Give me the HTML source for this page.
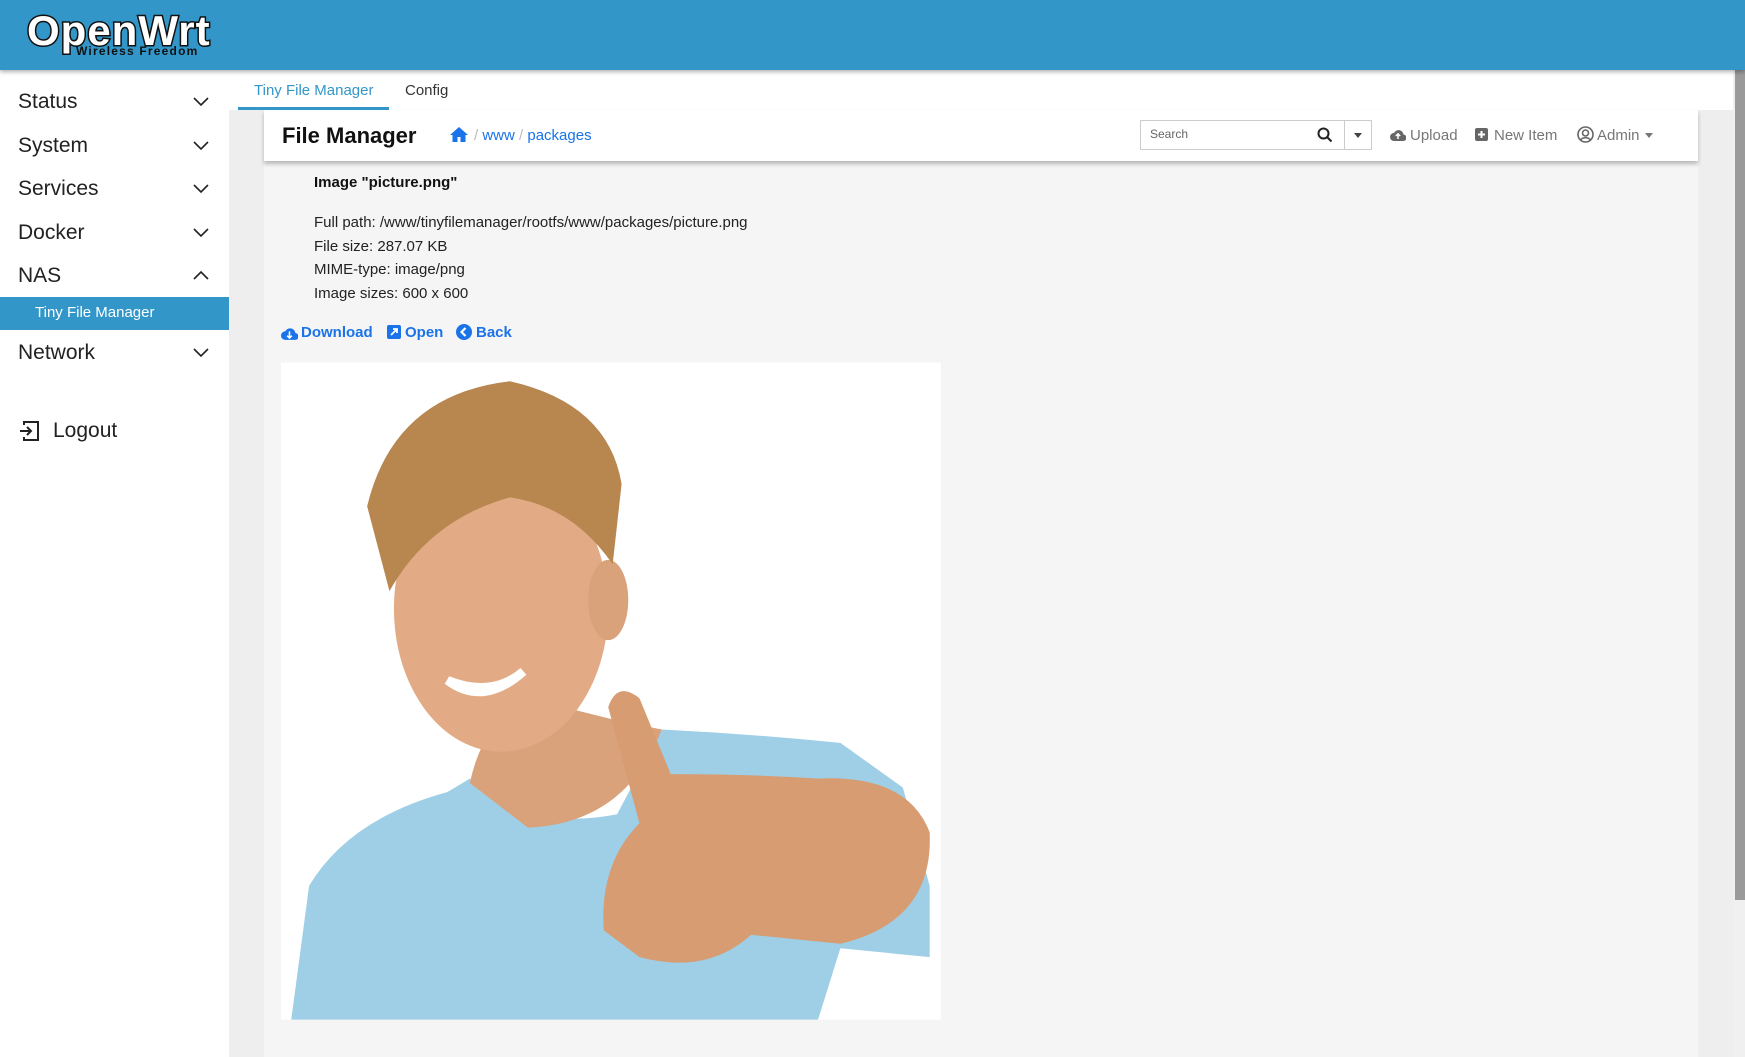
<!DOCTYPE html>
<html><head><meta charset="utf-8"><style>
*{margin:0;padding:0;box-sizing:border-box}
body{width:1745px;height:1057px;overflow:hidden;background:#eee;font-family:"Liberation Sans",sans-serif;position:relative;color:#222}
.hdr{position:absolute;left:0;top:0;width:1745px;height:70px;background:#3396c9;box-shadow:0 2px 4px rgba(0,0,0,.3);z-index:3}
.logo{position:absolute;left:27px;top:10px;font:bold 42px "Liberation Sans",sans-serif;color:#fff;letter-spacing:1px;-webkit-text-stroke:3px #111;paint-order:stroke fill;line-height:42px}
.logo small{position:absolute;left:49px;top:34px;font:bold 12px "Liberation Sans",sans-serif;color:#111;-webkit-text-stroke:0;letter-spacing:1.2px;white-space:nowrap}
.side{position:absolute;left:0;top:70px;width:229px;height:987px;background:#fff}
.it{position:absolute;left:18px;font-size:21px;color:#222}
.chev{position:absolute;left:193px;width:16px;height:16px}
.sel{position:absolute;left:0;top:227px;width:229px;height:33px;background:#3396c9;color:#fff;font-size:15px;padding:7px 0 0 35px}
.main{position:absolute;left:229px;top:70px;width:1504px;height:987px;background:#eee}
.tabs{position:absolute;left:0;top:0;width:1504px;height:40px;background:#fff}
.tab{position:absolute;top:12px;font-size:15px}
.card{position:absolute;left:35px;top:40px;width:1434px;height:947px;background:#f5f5f5}
.bar{position:absolute;left:0;top:0;width:1434px;height:51px;background:#fff;box-shadow:0 3px 4px rgba(0,0,0,.25)}
.t{position:absolute;font-size:15px;color:#222;white-space:nowrap}
.lnk{color:#1a73e8;font-weight:bold}
.scroll{position:absolute;left:1733px;top:70px;width:12px;height:987px;background:#f0f0f0}
.thumb{position:absolute;left:1735px;top:70px;width:10px;height:830px;background:#9a9a9a}
</style></head><body>
<div class="hdr"><div class="logo">OpenWrt<small>Wireless Freedom</small></div></div>
<div class="side">
<div class="it" style="top:20px">Status</div>
<div class="it" style="top:64px">System</div>
<div class="it" style="top:107px">Services</div>
<div class="it" style="top:151px">Docker</div>
<div class="it" style="top:194px">NAS</div>
<div class="sel">Tiny File Manager</div>
<div class="it" style="top:271px">Network</div>
<svg style="position:absolute;left:18px;top:350px" width="22" height="22" viewBox="0 0 22 22" fill="none" stroke="#222" stroke-width="2"><path d="M6 5V2h14v18H6v-3"/><path d="M2 11h11M9 7l4 4-4 4"/></svg>
<div class="it" style="top:349px;left:53px">Logout</div>
<svg class="chev" style="top:23px" viewBox="0 0 16 16" fill="none" stroke="#222" stroke-width="1.6"><path d="M1 5l7 7 7-7"/></svg>
<svg class="chev" style="top:67px" viewBox="0 0 16 16" fill="none" stroke="#222" stroke-width="1.6"><path d="M1 5l7 7 7-7"/></svg>
<svg class="chev" style="top:110px" viewBox="0 0 16 16" fill="none" stroke="#222" stroke-width="1.6"><path d="M1 5l7 7 7-7"/></svg>
<svg class="chev" style="top:154px" viewBox="0 0 16 16" fill="none" stroke="#222" stroke-width="1.6"><path d="M1 5l7 7 7-7"/></svg>
<svg class="chev" style="top:197px" viewBox="0 0 16 16" fill="none" stroke="#222" stroke-width="1.6"><path d="M1 12l7-7 7 7"/></svg>
<svg class="chev" style="top:274px" viewBox="0 0 16 16" fill="none" stroke="#222" stroke-width="1.6"><path d="M1 5l7 7 7-7"/></svg>
</div>
<div class="main">
<div class="tabs">
<div class="tab" style="left:25px;color:#3396c9">Tiny File Manager</div>
<div style="position:absolute;left:9px;top:37px;width:151px;height:3px;background:#3396c9"></div>
<div class="tab" style="left:176px;color:#333">Config</div>
</div>
<div class="card">
<div class="bar">
<div class="t" style="left:18px;top:13px;font-size:22px;font-weight:bold;color:#111">File Manager</div>
<svg style="position:absolute;left:186px;top:16px" width="18" height="16" viewBox="0 0 18 16"><path d="M9 1L0 9h2.5v7h5v-5h3v5h5V9H18z" fill="#1a73e8"/></svg>
<div class="t" style="left:210px;top:17px;color:#1a73e8"><span style="color:#bbb">/</span> www <span style="color:#bbb">/</span> packages</div>
<div style="position:absolute;left:876px;top:10px;width:232px;height:30px;border:1px solid #ccc;background:#fff"></div>
<div style="position:absolute;left:1080px;top:10px;width:1px;height:30px;background:#ccc"></div>
<div class="t" style="left:886px;top:17px;font-size:12px;color:#666">Search</div>
<svg style="position:absolute;left:1053px;top:17px" width="16" height="16" viewBox="0 0 16 16" fill="none" stroke="#222" stroke-width="2"><circle cx="6.5" cy="6.5" r="5"/><path d="M10 10l4.5 4.5"/></svg>
<div style="position:absolute;left:1090px;top:23px;border:4px solid transparent;border-top:5px solid #444"></div>
<svg style="position:absolute;left:1126px;top:18px" width="16" height="13" viewBox="0 0 16 13"><path d="M4 13a4 4 0 0 1 0-8 5 5 0 0 1 9.5 1.5A3.2 3.2 0 0 1 13 13z" fill="#666"/><path d="M8 11V6M5.8 8L8 5.8 10.2 8" stroke="#fff" stroke-width="1.5" fill="none"/></svg>
<div class="t" style="left:1146px;top:17px;color:#777">Upload</div>
<svg style="position:absolute;left:1211px;top:18px" width="13" height="13" viewBox="0 0 13 13"><rect width="13" height="13" rx="2" fill="#666"/><path d="M6.5 3v7M3 6.5h7" stroke="#fff" stroke-width="2"/></svg>
<div class="t" style="left:1230px;top:17px;color:#777">New Item</div>
<svg style="position:absolute;left:1313px;top:16px" width="17" height="17" viewBox="0 0 17 17" fill="none" stroke="#666" stroke-width="1.6"><circle cx="8.5" cy="8.5" r="7.5"/><circle cx="8.5" cy="7" r="3"/><path d="M3.5 14c2-3 8-3 10 0"/></svg>
<div class="t" style="left:1333px;top:17px;color:#777">Admin</div>
<div style="position:absolute;left:1381px;top:23px;border:4px solid transparent;border-top:5px solid #777"></div>
</div>
<div class="t" style="left:50px;top:64px;font-weight:bold;color:#111">Image "picture.png"</div>
<div class="t" style="left:50px;top:104px">Full path: /www/tinyfilemanager/rootfs/www/packages/picture.png</div>
<div class="t" style="left:50px;top:128px">File size: 287.07 KB</div>
<div class="t" style="left:50px;top:151px">MIME-type: image/png</div>
<div class="t" style="left:50px;top:175px">Image sizes: 600 x 600</div>
<svg style="position:absolute;left:17px;top:216px" width="17" height="14" viewBox="0 0 16 13"><path d="M4 13a4 4 0 0 1 0-8 5 5 0 0 1 9.5 1.5A3.2 3.2 0 0 1 13 13z" fill="#1a73e8"/><path d="M8 5v6M5.8 9L8 11.2 10.2 9" stroke="#fff" stroke-width="1.5" fill="none"/></svg>
<div class="t lnk" style="left:37px;top:214px">Download</div>
<svg style="position:absolute;left:123px;top:215px" width="14" height="14" viewBox="0 0 14 14"><rect width="14" height="14" rx="2" fill="#1a73e8"/><path d="M4 10l6-6M6 4h4v4" stroke="#fff" stroke-width="1.8" fill="none"/></svg>
<div class="t lnk" style="left:141px;top:214px">Open</div>
<svg style="position:absolute;left:192px;top:214px" width="16" height="16" viewBox="0 0 16 16"><circle cx="8" cy="8" r="8" fill="#1a73e8"/><path d="M9.5 4L5.5 8l4 4" stroke="#fff" stroke-width="2.2" fill="none"/></svg>
<div class="t lnk" style="left:212px;top:214px">Back</div>
</div>
</div>
<svg style="position:absolute;left:260px;top:350px" width="700" height="700" viewBox="0 0 1568 1568">
<rect x="47" y="28" width="1478" height="1472" fill="#fff"/>
<path d="M70,1500 L110,1200 Q200,1050 420,990 L470,960 Q600,1080 800,1040 L900,850 Q1100,860 1300,880 L1440,980 L1500,1200 L1500,1360 L1300,1340 L1250,1500 Z" fill="#9fcfe6"/>
<path d="M470,970 Q500,830 600,780 L800,830 L900,850 Q820,1060 600,1070 Z" fill="#d9a27a"/>
<ellipse cx="540" cy="580" rx="240" ry="320" fill="#e2ab85"/>
<ellipse cx="780" cy="560" rx="45" ry="90" fill="#d9a27a"/>
<path d="M240,350 Q300,100 560,70 Q780,120 810,300 L790,480 Q700,350 560,330 Q380,380 290,540 Z" fill="#b8874f"/>
<path d="M420,740 Q500,800 590,720 Q520,780 420,740Z" fill="#fff" stroke="#fff" stroke-width="20"/>
<path d="M770,1300 Q760,1150 850,1060 L780,800 Q800,740 850,780 L920,950 Q1100,950 1250,960 Q1450,950 1500,1080 Q1510,1280 1300,1330 L1100,1310 Q1000,1400 850,1360 Z" fill="#d79c72"/>
</svg>
<div class="scroll"></div><div class="thumb"></div>
</body></html>
